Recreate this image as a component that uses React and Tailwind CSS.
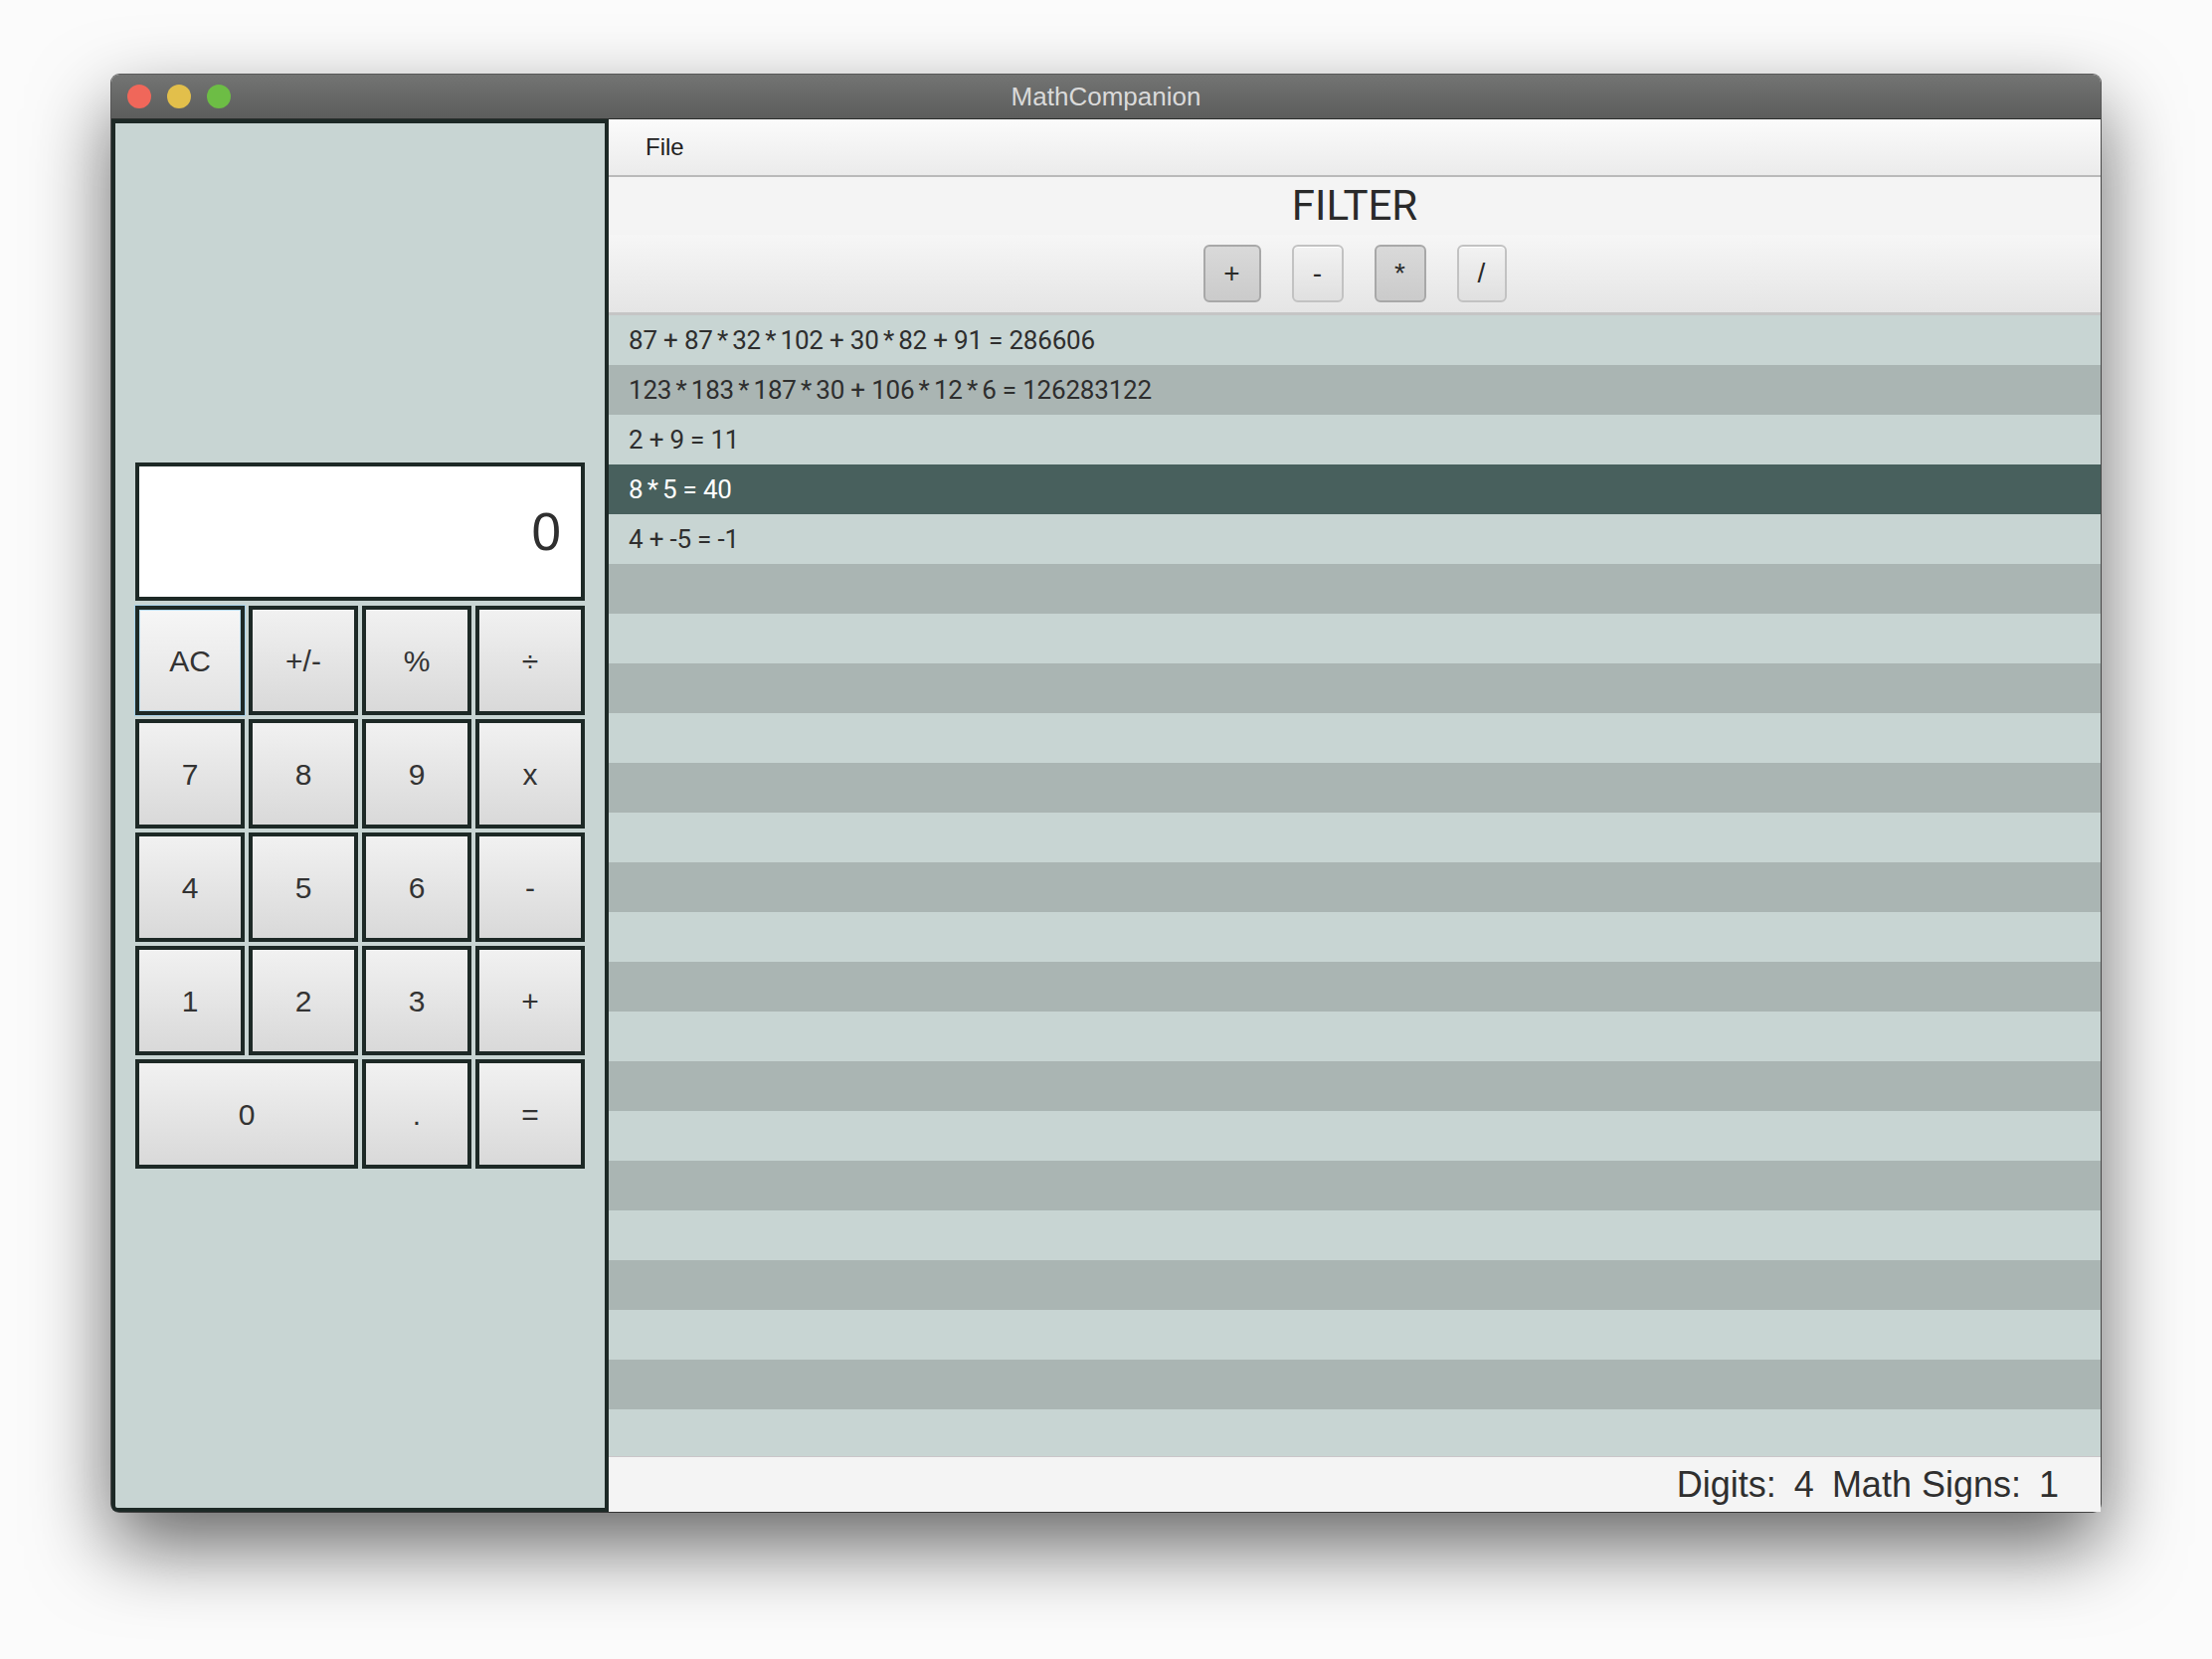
import React from 'react';

const rows = [
  '87 + 87 * 32 * 102 + 30 * 82 + 91 = 286606',
  '123 * 183 * 187 * 30 + 106 * 12 * 6 = 126283122',
  '2 + 9 = 11',
  '8 * 5 = 40',
  '4 + -5 = -1',
];

const keys = [
  { label: 'AC', focus: true },
  { label: '+/-' },
  { label: '%' },
  { label: '÷' },
  { label: '7' },
  { label: '8' },
  { label: '9' },
  { label: 'x' },
  { label: '4' },
  { label: '5' },
  { label: '6' },
  { label: '-' },
  { label: '1' },
  { label: '2' },
  { label: '3' },
  { label: '+' },
  { label: '0', wide: true },
  { label: '.' },
  { label: '=' },
];

const filters = [
  { label: '+', on: true, w: 'w-[58px]' },
  { label: '-', on: false, w: 'w-[52px]' },
  { label: '*', on: true, w: 'w-[52px]' },
  { label: '/', on: false, w: 'w-[50px]' },
];

// asterisks sit tighter than the other signs in the original list
function Expression({ text }) {
  const parts = text.split(' * ');
  return (
    <span className="whitespace-pre tracking-[-0.2px]">
      {parts.map((p, i) => (
        <React.Fragment key={i}>
          {i > 0 && <span className="mx-[-2px]">{' * '}</span>}
          {p}
        </React.Fragment>
      ))}
    </span>
  );
}

function TitleBar() {
  return (
    <div className="relative flex h-[45px] shrink-0 items-center justify-center rounded-t-[8px] border-b border-[#2b2e2d] bg-gradient-to-b from-[#737473] to-[#5c5d5c]">
      <div className="absolute left-[16px] top-[10px] flex gap-[16px]">
        <span className="h-[24px] w-[24px] rounded-full bg-[#f0675a]" />
        <span className="h-[24px] w-[24px] rounded-full bg-[#e2bf4b]" />
        <span className="h-[24px] w-[24px] rounded-full bg-[#6dbd45]" />
      </div>
      <span className="text-[26px] text-[#dadada]">MathCompanion</span>
    </div>
  );
}

function Calculator() {
  return (
    <div className="flex w-[500px] shrink-0 items-center justify-center rounded-bl-[6px] border-4 border-[#1d2926] bg-[#c8d5d3]">
      <div className="w-[452px]">
        <div className="flex h-[139px] items-center justify-end border-4 border-[#1d2926] bg-white pr-[20px]">
          <span className="text-[53px] leading-none text-[#2f2f2f]">0</span>
        </div>
        <div className="mt-[5px] grid grid-cols-4 gap-[4px]">
          {keys.map((k) => (
            <button
              key={k.label}
              type="button"
              className={`flex h-[110px] items-center justify-center border-4 border-[#1d2926] text-[30px] text-[#333] ${
                k.wide ? 'col-span-2' : ''
              } ${
                k.focus
                  ? 'bg-gradient-to-b from-[#f6f6f6] to-[#e2e2e2] shadow-[0_0_0_1px_#a9d3ea,inset_0_0_0_1px_#b8dcef]'
                  : 'bg-gradient-to-b from-[#f1f1f1] to-[#d9d9d9]'
              }`}
            >
              {k.label}
            </button>
          ))}
        </div>
      </div>
    </div>
  );
}

function HistoryPane() {
  const total = 23;
  return (
    <div className="flex min-w-0 flex-1 flex-col bg-[#f4f4f4]">
      <div className="flex h-[58px] shrink-0 items-center border-b-2 border-[#b9b9b9] bg-gradient-to-b from-[#fbfbfb] to-[#ebebeb] pl-[37px]">
        <span className="text-[24px] text-[#222]">File</span>
      </div>
      <div className="flex h-[58px] shrink-0 items-center justify-center bg-[#f4f4f4]">
        <span className="font-['Roboto'] text-[42px] leading-none text-[#2a2a2a]">FILTER</span>
      </div>
      <div className="flex h-[81px] shrink-0 items-center justify-center gap-[31px] border-b-[3px] border-[#c5c5c5] bg-gradient-to-b from-[#f6f6f6] to-[#e5e5e5]">
        {filters.map((f) => (
          <button
            key={f.label}
            type="button"
            className={`flex h-[58px] ${f.w} items-center justify-center rounded-[6px] border-2 text-[28px] text-[#2a2a2a] ${
              f.on
                ? 'border-[#a8a8a8] bg-gradient-to-b from-[#d9d9d9] to-[#cbcbcb]'
                : 'border-[#c2c2c2] bg-gradient-to-b from-[#f2f2f2] to-[#e0e0e0] shadow-[inset_0_1px_0_#ffffff]'
            }`}
          >
            {f.label}
          </button>
        ))}
      </div>
      <div className="min-h-0 flex-1 overflow-hidden">
        {Array.from({ length: total }).map((_, i) => {
          const text = rows[i];
          const selected = i === 3;
          const bg = selected
            ? 'bg-[#48605d] text-white'
            : i % 2 === 0
              ? 'bg-[#c8d5d3] text-[#2e2e2e]'
              : 'bg-[#aab5b3] text-[#2e2e2e]';
          return (
            <div key={i} className={`flex h-[50px] items-center pl-[20px] font-['Roboto'] text-[26px] ${bg}`}>
              {text && <Expression text={text} />}
            </div>
          );
        })}
      </div>
      <div className="flex h-[56px] shrink-0 items-center justify-end gap-[18px] rounded-br-[6px] border-t border-[#cac6c9] bg-[#f4f4f4] pr-[42px] text-[36px] text-[#2f2f2f]">
        <span>Digits:</span>
        <span>4</span>
        <span>Math Signs:</span>
        <span>1</span>
      </div>
    </div>
  );
}

export default function App() {
  return (
    <div className="h-[1668px] w-[2224px] bg-[#fbfbfb] pt-[75px] font-['Liberation_Sans',Arial,sans-serif]">
      <div className="mx-auto flex h-[1445px] w-[2000px] flex-col rounded-[8px] shadow-[0_0_0_1px_rgba(0,0,0,0.6),0_34px_80px_rgba(0,0,0,0.6)]">
        <TitleBar />
        <div className="flex min-h-0 flex-1">
          <Calculator />
          <HistoryPane />
        </div>
      </div>
    </div>
  );
}
